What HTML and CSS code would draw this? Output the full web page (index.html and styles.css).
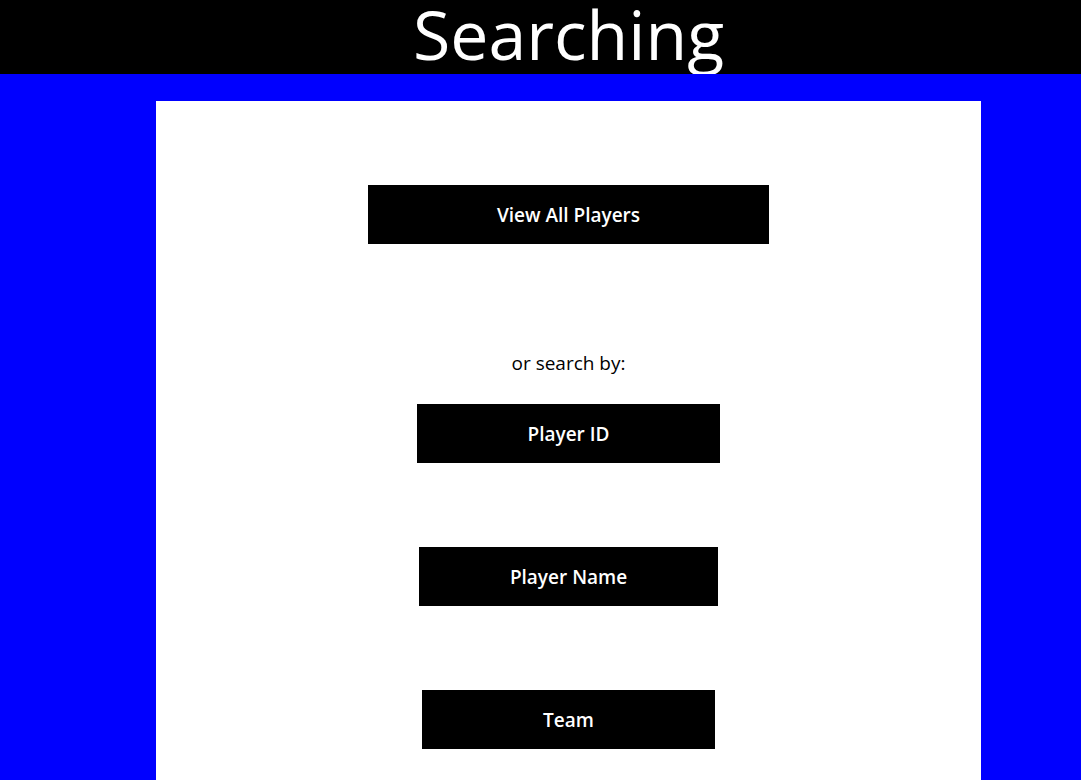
FILE: index.html
```html
<!DOCTYPE html>
<html>
<head>
<meta charset="utf-8">
<title>Searching</title>
<link rel="stylesheet" href="styles.css">
</head>
<body>
<div class="page">
  <header class="top">
    <h1 class="title">Searching</h1>
  </header>
  <main class="card">
    <button class="btn btn-all">View All Players</button>
    <p class="or">or search by:</p>
    <button class="btn btn-id">Player ID</button>
    <button class="btn btn-name">Player Name</button>
    <button class="btn btn-team">Team</button>
  </main>
</div>
</body>
</html>
```
FILE: styles.css
```css
html, body {
  margin: 0;
  padding: 0;
  overflow: hidden;
  background: #0000ff;
}
.page {
  font-family: "Trebuchet MS", "Open Sans", sans-serif;
}
.top {
  background: #000;
  height: 74px;
  padding-left: 56px;
  display: flex;
  justify-content: center;
  align-items: flex-start;
  overflow: hidden;
}
.title {
  margin: 0;
  color: #fff;
  font-weight: normal;
  font-size: 68px;
  line-height: 67px;
}
.card {
  background: #fff;
  width: 825px;
  margin: 27px 0 0 156px;
  padding: 84px 0 31px;
  display: flex;
  flex-direction: column;
  align-items: center;
}
.btn {
  background: #000;
  color: #fff;
  border: 0;
  height: 59px;
  font-family: inherit;
  font-size: 19px;
  font-weight: 600;
  padding: 0;
}
.btn-all { width: 401px; }
.btn-id { width: 303px; }
.btn-name { width: 299px; margin-top: 84px; }
.btn-team { width: 293px; margin-top: 84px; }
.or {
  margin: 108px 0 30px;
  font-size: 19px;
  line-height: 22px;
  color: #000;
}
```
